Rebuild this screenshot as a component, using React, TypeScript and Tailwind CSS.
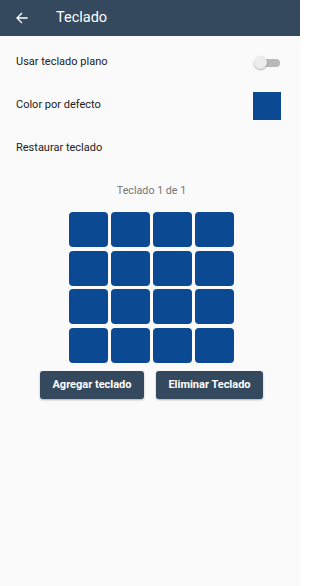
import React from 'react';

const Header = () => (
  <div className="flex h-[36px] items-center bg-[#34495e] text-white">
    <svg className="ml-[16px] h-[12px] w-[12px]" viewBox="0 0 24 24" fill="none">
      <path d="M22 12H3M11 3l-9 9 9 9" stroke="currentColor" strokeWidth="2.6" strokeLinecap="square" />
    </svg>
    <span className="ml-[28px] text-[14.5px] leading-none">Teclado</span>
  </div>
);

const Row = ({ label, children }: { label: string; children?: React.ReactNode }) => (
  <div className="flex h-[43px] items-center justify-between pl-[16px] pr-[19px]">
    <span className="text-[11px] text-[#212121]">{label}</span>
    {children}
  </div>
);

const Toggle = () => (
  <div className="relative mr-[1px] h-[13px] w-[26px]">
    <div className="absolute left-[4px] right-0 top-[2.5px] h-[8px] rounded-full bg-[#b9b9b9]" />
    <div className="absolute left-0 top-0 h-[13px] w-[13px] rounded-full bg-[#ececec] shadow-[0_1px_2px_rgba(0,0,0,0.3)]" />
  </div>
);

const ActionButton = ({ children, width }: { children: React.ReactNode; width: string }) => (
  <button
    type="button"
    className={`${width} h-[28px] rounded-[3px] bg-[#34495e] text-[11px] font-bold text-white shadow-[0_1px_2px_rgba(0,0,0,0.3)]`}
  >
    {children}
  </button>
);

export default function App() {
  const keys = Array.from({ length: 16 });
  return (
    <div className="h-[586px] w-[300px] bg-[#fafafa] font-['Roboto',sans-serif]">
      <Header />
      <div className="pt-[5px]">
        <Row label="Usar teclado plano">
          <Toggle />
        </Row>
        <Row label="Color por defecto">
          <div className="h-[28px] w-[28px] bg-[#0b4a92]" />
        </Row>
        <Row label="Restaurar teclado" />
      </div>
      <div className="flex flex-col items-center pl-[3px]">
        <p className="mt-[14px] text-[10.7px] leading-[14px] text-[#757575]">Teclado 1 de 1</p>
        <div className="mt-[14px] grid grid-cols-4 gap-x-[3.3px] gap-y-[3.6px]">
          {keys.map((_, i) => (
            <div key={i} className="h-[35px] w-[39px] rounded-[4px] bg-[#0b4a92]" />
          ))}
        </div>
        <div className="mt-[8px] flex gap-[12px]">
          <ActionButton width="w-[104px]">Agregar teclado</ActionButton>
          <ActionButton width="w-[107px]">Eliminar Teclado</ActionButton>
        </div>
      </div>
    </div>
  );
}
